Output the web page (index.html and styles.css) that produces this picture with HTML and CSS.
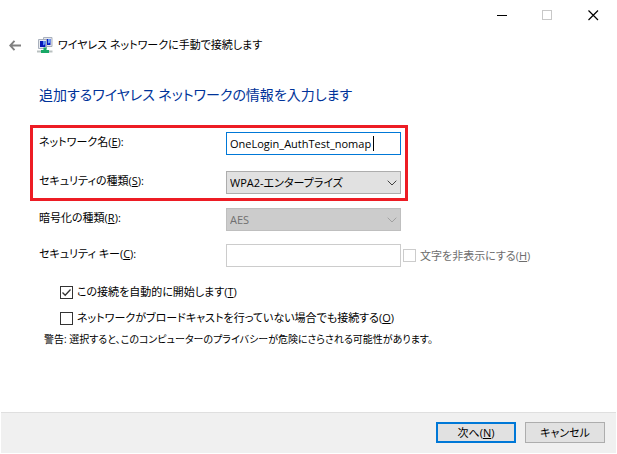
FILE: index.html
```html
<!DOCTYPE html>
<html lang="ja">
<head>
<meta charset="utf-8">
<meta name="viewport" content="width=device-width, initial-scale=1">
<title>ワイヤレス ネットワークに手動で接続します</title>
<link rel="stylesheet" href="styles.css">
</head>
<body>
<div class="window">
  <div class="titlebar">
    <button class="caption" type="button" aria-label="最小化"><svg width="11" height="11" viewBox="0 0 11 11" shape-rendering="crispEdges"><path d="M1 5.500h10" stroke="#000"/></svg></button>
    <button class="caption" type="button" aria-label="最大化" disabled><svg width="11" height="11" viewBox="0 0 11 11" shape-rendering="crispEdges"><path d="M.5.5h9v9h-9z" fill="none" stroke="#c8c8c8"/></svg></button>
    <button class="caption" type="button" aria-label="閉じる"><svg width="11" height="11" viewBox="0 0 11 11"><path d="M.5.5l9.500 9.500M10 .5L.5 10" fill="none" stroke="#000" stroke-width="1.200"/></svg></button>
  </div>

  <header class="header">
    <button class="back" type="button" aria-label="戻る"><svg width="12" height="11" viewBox="0 0 12 11"><path d="M5.500.8L1.200 5.500l4.300 4.700M1.500 5.500H12" fill="none" stroke="#808080" stroke-width="1.900"/></svg></button>
    <svg class="network-icon" width="16" height="16" viewBox="0 0 16 16">
      <path d="M6.500.5h8.500v9H6.500z" fill="#e3e6ec" stroke="#a9b0bc"/>
      <path d="M8 2h5.500v6H8z" fill="#0a1cc0"/>
      <path d="M11 2h2.500v3.500l-2.500 1z" fill="#6b9cf5"/>
      <path d="M1.500 2.500h8v9h-8z" fill="#e6e9ee" stroke="#a9b0bc"/>
      <path d="M3 4h5.500v6H3z" fill="#0718b8"/>
      <path d="M6 4h2.500v3L6 8.500z" fill="#5f90f3"/>
      <path d="M0 14.500h15.500" stroke="#b9c0c0" stroke-width="2"/>
      <path d="M6.500 10.500h3V13H12v3H4v-3h2.500z" fill="#18a866"/>
    </svg>
    <span class="title">ワイヤレス ネットワークに手動で接続します</span>
  </header>

  <main class="content">
    <h1 class="heading">追加するワイヤレス ネットワークの情報を入力します</h1>
    <form class="form" id="wifi">
      <div class="group marked">
        <div class="row">
          <label class="name" for="name">ネットワーク名(<u>E</u>):</label>
          <div class="field">
            <input class="control active" id="name" type="text" value="OneLogin_AuthTest_nomap">
            <span class="caret"></span>
          </div>
        </div>
        <div class="row">
          <label class="name" for="security">セキュリティの種類(<u>S</u>):</label>
          <div class="field">
            <select class="control" id="security"><option>WPA2-エンタープライズ</option></select>
            <svg class="chevron" width="10" height="6" viewBox="0 0 10 6"><path d="M.7.7L5 5 9.300.7" fill="none" stroke="#404040"/></svg>
          </div>
        </div>
      </div>
      <div class="group">
        <div class="row">
          <label class="name" for="cipher">暗号化の種類(<u>R</u>):</label>
          <div class="field">
            <select class="control" id="cipher" disabled><option>AES</option></select>
            <svg class="chevron" width="10" height="6" viewBox="0 0 10 6"><path d="M.7.7L5 5 9.300.7" fill="none" stroke="#a0a0a0"/></svg>
          </div>
        </div>
        <div class="row">
          <label class="name" for="key">セキュリティ キー(<u>C</u>):</label>
          <div class="field"><input class="control" id="key" type="text" disabled></div>
          <label class="check muted"><input type="checkbox" disabled><span>文字を非表示にする(<u>H</u>)</span></label>
        </div>
      </div>
      <div class="options">
        <label class="check"><input type="checkbox" checked><span>この接続を自動的に開始します(<u>T</u>)</span><svg class="tick" width="13" height="13" viewBox="0 0 13 13"><path d="M2.500 6.500l2.700 2.800 5.300-5.800" fill="none" stroke="#333" stroke-width="1.300"/></svg></label>
        <label class="check"><input type="checkbox"><span>ネットワークがブロードキャストを行っていない場合でも接続する(<u>O</u>)</span></label>
      </div>
      <p class="warning">警告: 選択すると、このコンピューターのプライバシーが危険にさらされる可能性があります。</p>
    </form>
  </main>

  <footer class="footer">
    <button class="button primary" type="submit" form="wifi">次へ(<u>N</u>)</button>
    <button class="button" type="button">キャンセル</button>
  </footer>
</div>
</body>
</html>
```
FILE: styles.css
```css
* {
  box-sizing: border-box;
}

body {
  margin: 0;
  background: #fff;
  color: #000;
  font: 11px/18px "Open Sans", "Noto Sans CJK JP", sans-serif;
  font-feature-settings: "palt";
}

button,
input,
select {
  margin: 0;
  color: inherit;
  font: inherit;
  font-feature-settings: inherit;
}

svg {
  display: block;
}

u {
  text-underline-offset: 1px;
}

.window {
  display: flex;
  flex-direction: column;
  min-height: 100vh;
  padding: 0 1px 1px;
}

.titlebar {
  display: flex;
  justify-content: flex-end;
}

.caption {
  display: flex;
  align-items: center;
  justify-content: center;
  width: 46px;
  height: 30px;
  padding: 0;
  border: 0;
  background: none;
}

.header {
  display: flex;
  align-items: center;
  height: 30px;
  padding-left: 8px;
}

.back {
  padding: 0;
  border: 0;
  background: none;
}

.network-icon {
  margin: 0 5px 0 16px;
}

.content {
  padding: 23px 29px 0;
}

.heading {
  margin: 0 0 18px;
  padding-left: 9px;
  color: #039;
  font-size: 14px;
  font-weight: 400;
  line-height: 24px;
}

.group {
  display: grid;
  justify-content: start;
  row-gap: 13px;
  padding: 7px 4px 0 9px;
}

.marked {
  row-gap: 16px;
  width: 378px;
  padding: 4px 4px 4px 6px;
  border: 3px solid #ed1c24;
}

.row {
  display: grid;
  grid-template-columns: 187px 175px auto;
}

.name {
  padding-top: 1px;
}

.field {
  position: relative;
}

.control {
  display: block;
  width: 100%;
  height: 23px;
  padding: 0 3px;
  border: 1px solid #ccc;
  border-radius: 0;
  outline: 0;
  appearance: none;
  background: #fff;
}

select.control {
  border-color: #adadad;
  background: #e1e1e1;
}

select.control:disabled {
  border-color: #bfbfbf;
  background: #ccc;
  color: #707070;
  opacity: 1;
}

.control.active {
  border-color: #0078d7;
}

.caret {
  position: absolute;
  top: 4px;
  left: 147px;
  width: 1px;
  height: 15px;
  background: #000;
}

.chevron {
  position: absolute;
  top: 9px;
  right: 4px;
  pointer-events: none;
}

.check {
  display: flex;
  position: relative;
  align-items: center;
  gap: 4px;
}

.check input {
  flex: none;
  width: 13px;
  height: 13px;
  border: 1px solid #333;
  appearance: none;
  background: #fff;
}

.tick {
  position: absolute;
  left: 0;
  pointer-events: none;
}

.muted {
  padding-left: 2px;
  color: #6d6d6d;
}

.check.muted input {
  border-color: #ccc;
}

.options {
  display: grid;
  justify-content: start;
  row-gap: 8px;
  padding: 16px 0 0 30px;
}

.warning {
  margin: 3px 0 12px;
  padding-left: 14px;
  font-size: 10px;
}

.footer {
  display: flex;
  justify-content: flex-end;
  gap: 9px;
  margin-top: auto;
  padding: 9px 11px 10px;
  border-top: 1px solid #dfdfdf;
  background: #f0f0f0;
}

.button {
  width: 80px;
  height: 21px;
  padding: 0;
  border: 1px solid #adadad;
  background: #e1e1e1;
  line-height: 17px;
}

.primary {
  border: 2px solid #0078d7;
}
```
